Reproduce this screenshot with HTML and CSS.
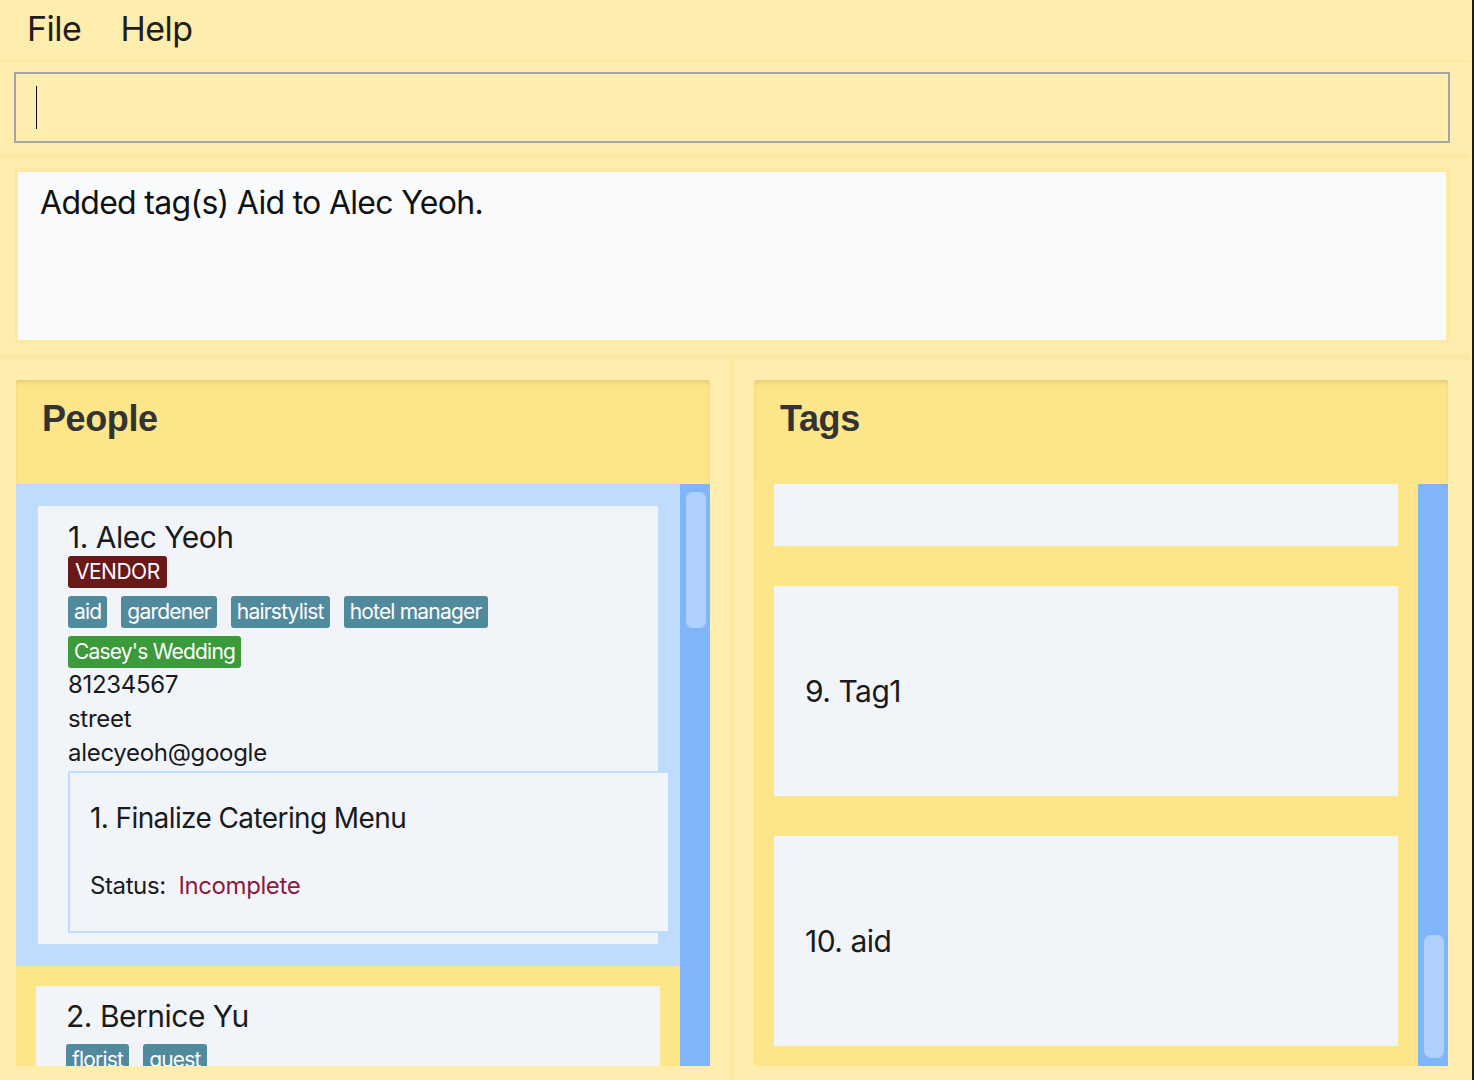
FILE: index.html
```html
<!DOCTYPE html>
<html lang="en">
<head>
<meta charset="utf-8">
<title>Address Book</title>
<link rel="stylesheet" href="styles.css">
</head>
<body>
<div class="window">
  <nav class="menubar">
    <span class="menu-item">File</span>
    <span class="menu-item">Help</span>
  </nav>

  <section class="command">
    <div class="command-box"><span class="caret"></span></div>
  </section>

  <section class="result">
    <div class="result-box">
      <p class="result-text">Added tag(s) Aid to Alec Yeoh.</p>
    </div>
  </section>

  <main class="lists">
    <div class="pane pane-left">
      <div class="panel">
        <header class="panel-header">People</header>
        <div class="listview">
          <div class="items">
            <div class="cell cell-selected">
              <div class="person-card card-selected">
                <div class="person-name">1. Alec Yeoh</div>
                <div class="tag-row"><span class="tag tag-role">VENDOR</span></div>
                <div class="tag-row">
                  <span class="tag tag-blue">aid</span>
                  <span class="tag tag-blue">gardener</span>
                  <span class="tag tag-blue">hairstylist</span>
                  <span class="tag tag-blue">hotel manager</span>
                </div>
                <div class="tag-row"><span class="tag tag-green">Casey's Wedding</span></div>
                <div class="field">81234567</div>
                <div class="field">street</div>
                <div class="field">alecyeoh@google</div>
                <div class="task-box">
                  <div class="task-title">1. Finalize Catering Menu</div>
                  <div class="task-status">Status:&nbsp; <span class="incomplete">Incomplete</span></div>
                </div>
              </div>
            </div>
            <div class="cell">
              <div class="person-card">
                <div class="person-name">2. Bernice Yu</div>
                <div class="tag-row tag-row-first">
                  <span class="tag tag-blue">florist</span>
                  <span class="tag tag-blue">guest</span>
                </div>
              </div>
            </div>
          </div>
          <div class="scrollbar"><div class="thumb thumb-top"></div></div>
        </div>
      </div>
    </div>

    <div class="vdivider"></div>

    <div class="pane pane-right">
      <div class="panel">
        <header class="panel-header">Tags</header>
        <div class="listview listview-tags">
          <div class="items tag-items">
            <div class="tag-cell"><div class="tag-card"></div></div>
            <div class="tag-cell"><div class="tag-card">9. Tag1</div></div>
            <div class="tag-cell"><div class="tag-card">10. aid</div></div>
          </div>
          <div class="scrollbar"><div class="thumb thumb-bottom"></div></div>
        </div>
      </div>
    </div>
  </main>
</div>
</body>
</html>
```

FILE: styles.css
```css
* {
  box-sizing: border-box;
}

html, body {
  margin: 0;
  padding: 0;
  background: #7a7f8c;
}

body {
  width: 1474px;
  height: 1080px;
  overflow: hidden;
  font-family: "Inter", "Noto Sans", sans-serif;
  color: #1b1b1b;
}

.window {
  width: 1474px;
  height: 1080px;
  background: #ffedae;
  border-right: 2px solid #1d1d1d;
  display: flex;
  flex-direction: column;
}

/* Menu bar */
.menubar {
  height: 62px;
  flex: none;
  display: flex;
  align-items: flex-start;
  gap: 39px;
  padding: 7px 0 0 27px;
  border-bottom: 2px solid #fde8a2;
  margin-right: 2px;
}

.menu-item {
  font-size: 34px;
  line-height: 44px;
  color: #1e1e1e;
  letter-spacing: -0.5px;
}

/* Command box */
.command {
  flex: none;
  height: 96px;
  padding: 10px 20px 0 14px;
  border-bottom: 4px solid #fde8a2;
  margin-right: 2px;
}

.command-box {
  height: 71px;
  border: 2px solid #a4a4a4;
  background: #ffedae;
  padding: 12px 0 0 20px;
}

.caret {
  display: block;
  width: 1px;
  height: 43px;
  background: #111;
}

/* Result display */
.result {
  flex: none;
  height: 202px;
  padding: 10px 21px 0 15px;
  border-bottom: 6px solid #fde9a6;
  margin-right: 2px;
}

.result-box {
  height: 175px;
  border: 3px solid #fde9a2;
  border-top-width: 4px;
  background: #f8fafc;
  padding: 11px 0 0 22px;
}

.result-text {
  margin: 0;
  font-size: 32px;
  line-height: 40px;
  color: #111;
  letter-spacing: -0.7px;
}

/* Lower lists */
.lists {
  flex: 1;
  display: flex;
  min-height: 0;
}

.pane {
  display: flex;
  min-width: 0;
  padding-top: 20px;
  padding-bottom: 14px;
}

.pane-left {
  flex: none;
  width: 730px;
  padding-left: 16px;
  padding-right: 20px;
}

.pane-right {
  flex: 1;
  padding-left: 20px;
  padding-right: 24px;
}

.vdivider {
  flex: none;
  width: 4px;
  background: #fde8a0;
}

.panel {
  flex: 1;
  display: flex;
  flex-direction: column;
  min-height: 0;
  min-width: 0;
}

.panel-header {
  flex: none;
  height: 104px;
  background: #fde58a;
  border-radius: 3px 3px 0 0;
  box-shadow: inset 0 4px 5px -2px rgba(180, 150, 60, 0.35);
  padding: 19px 0 0 26px;
  font-family: "Liberation Sans", Arial, sans-serif;
  font-weight: bold;
  font-size: 36px;
  line-height: 40px;
  color: #333333;
  letter-spacing: -0.4px;
}

.listview {
  flex: 1;
  display: flex;
  min-height: 0;
  min-width: 0;
  overflow: hidden;
  background: #fde58a;
}

.items {
  flex: 1;
  min-width: 0;
  overflow: hidden;
}

.scrollbar {
  flex: none;
  width: 30px;
  background: #80b5fa;
  padding: 8px 4px 0 6px;
}

.thumb {
  width: 20px;
  background: #afd0fb;
  border-radius: 7px;
}

.thumb-top {
  height: 136px;
}

.thumb-bottom {
  height: 123px;
  margin-top: 443px;
}

/* People cells */
.cell {
  padding: 20px 20px 20px 20px;
  background: #fde58a;
}

.cell-selected {
  background: #bfdbfe;
  padding: 22px 22px 22px 22px;
}

.person-card {
  min-width: 0;
  background: #f1f5fa;
  padding: 12px 0 40px 30px;
}

.card-selected {
  padding: 13px 0 11px 30px;
}

.person-name {
  font-size: 30px;
  line-height: 36px;
  letter-spacing: -0.5px;
  color: #1a1a1a;
}

.tag-row {
  display: flex;
  flex-wrap: wrap;
  gap: 14px;
  margin-top: 8px;
}

.card-selected .person-name + .tag-row {
  margin-top: 1px;
}

.tag-row-first {
  margin-top: 10px;
}

.tag {
  display: inline-block;
  height: 32px;
  line-height: 32px;
  padding: 0 6px;
  font-size: 21px;
  color: #ffffff;
  border-radius: 3px;
  letter-spacing: -0.8px;
}

.tag-role {
  background: #6a1818;
  padding: 0 7px;
  letter-spacing: -0.5px;
}

.tag-blue {
  background: #528a9d;
}

.tag-green {
  background: #3b9a3a;
}

.field {
  font-size: 24px;
  line-height: 34px;
  color: #1a1a1a;
  letter-spacing: -0.3px;
}

.task-box {
  width: 602px;
  height: 162px;
  margin-top: 1px;
  border: 2px solid #bfdbfe;
  background: #f1f5fa;
  padding: 28px 0 0 20px;
}

.task-title {
  font-size: 28px;
  line-height: 34px;
  color: #1a1a1a;
  letter-spacing: -0.6px;
}

.task-status {
  margin-top: 34px;
  font-size: 24px;
  line-height: 34px;
  color: #1a1a1a;
  letter-spacing: -0.4px;
}

.incomplete {
  color: #8e1a3c;
}

/* Tag cells */
.tag-items {
  display: flex;
  flex-direction: column;
}

.tag-cell {
  flex: none;
  height: 250px;
  padding: 20px 20px;
}

.tag-cell:first-child {
  margin-top: -168px;
}

.tag-card {
  height: 210px;
  background: #f1f5fa;
  display: flex;
  align-items: center;
  padding-left: 31px;
  font-size: 30px;
  letter-spacing: -0.5px;
  color: #1a1a1a;
}
```
